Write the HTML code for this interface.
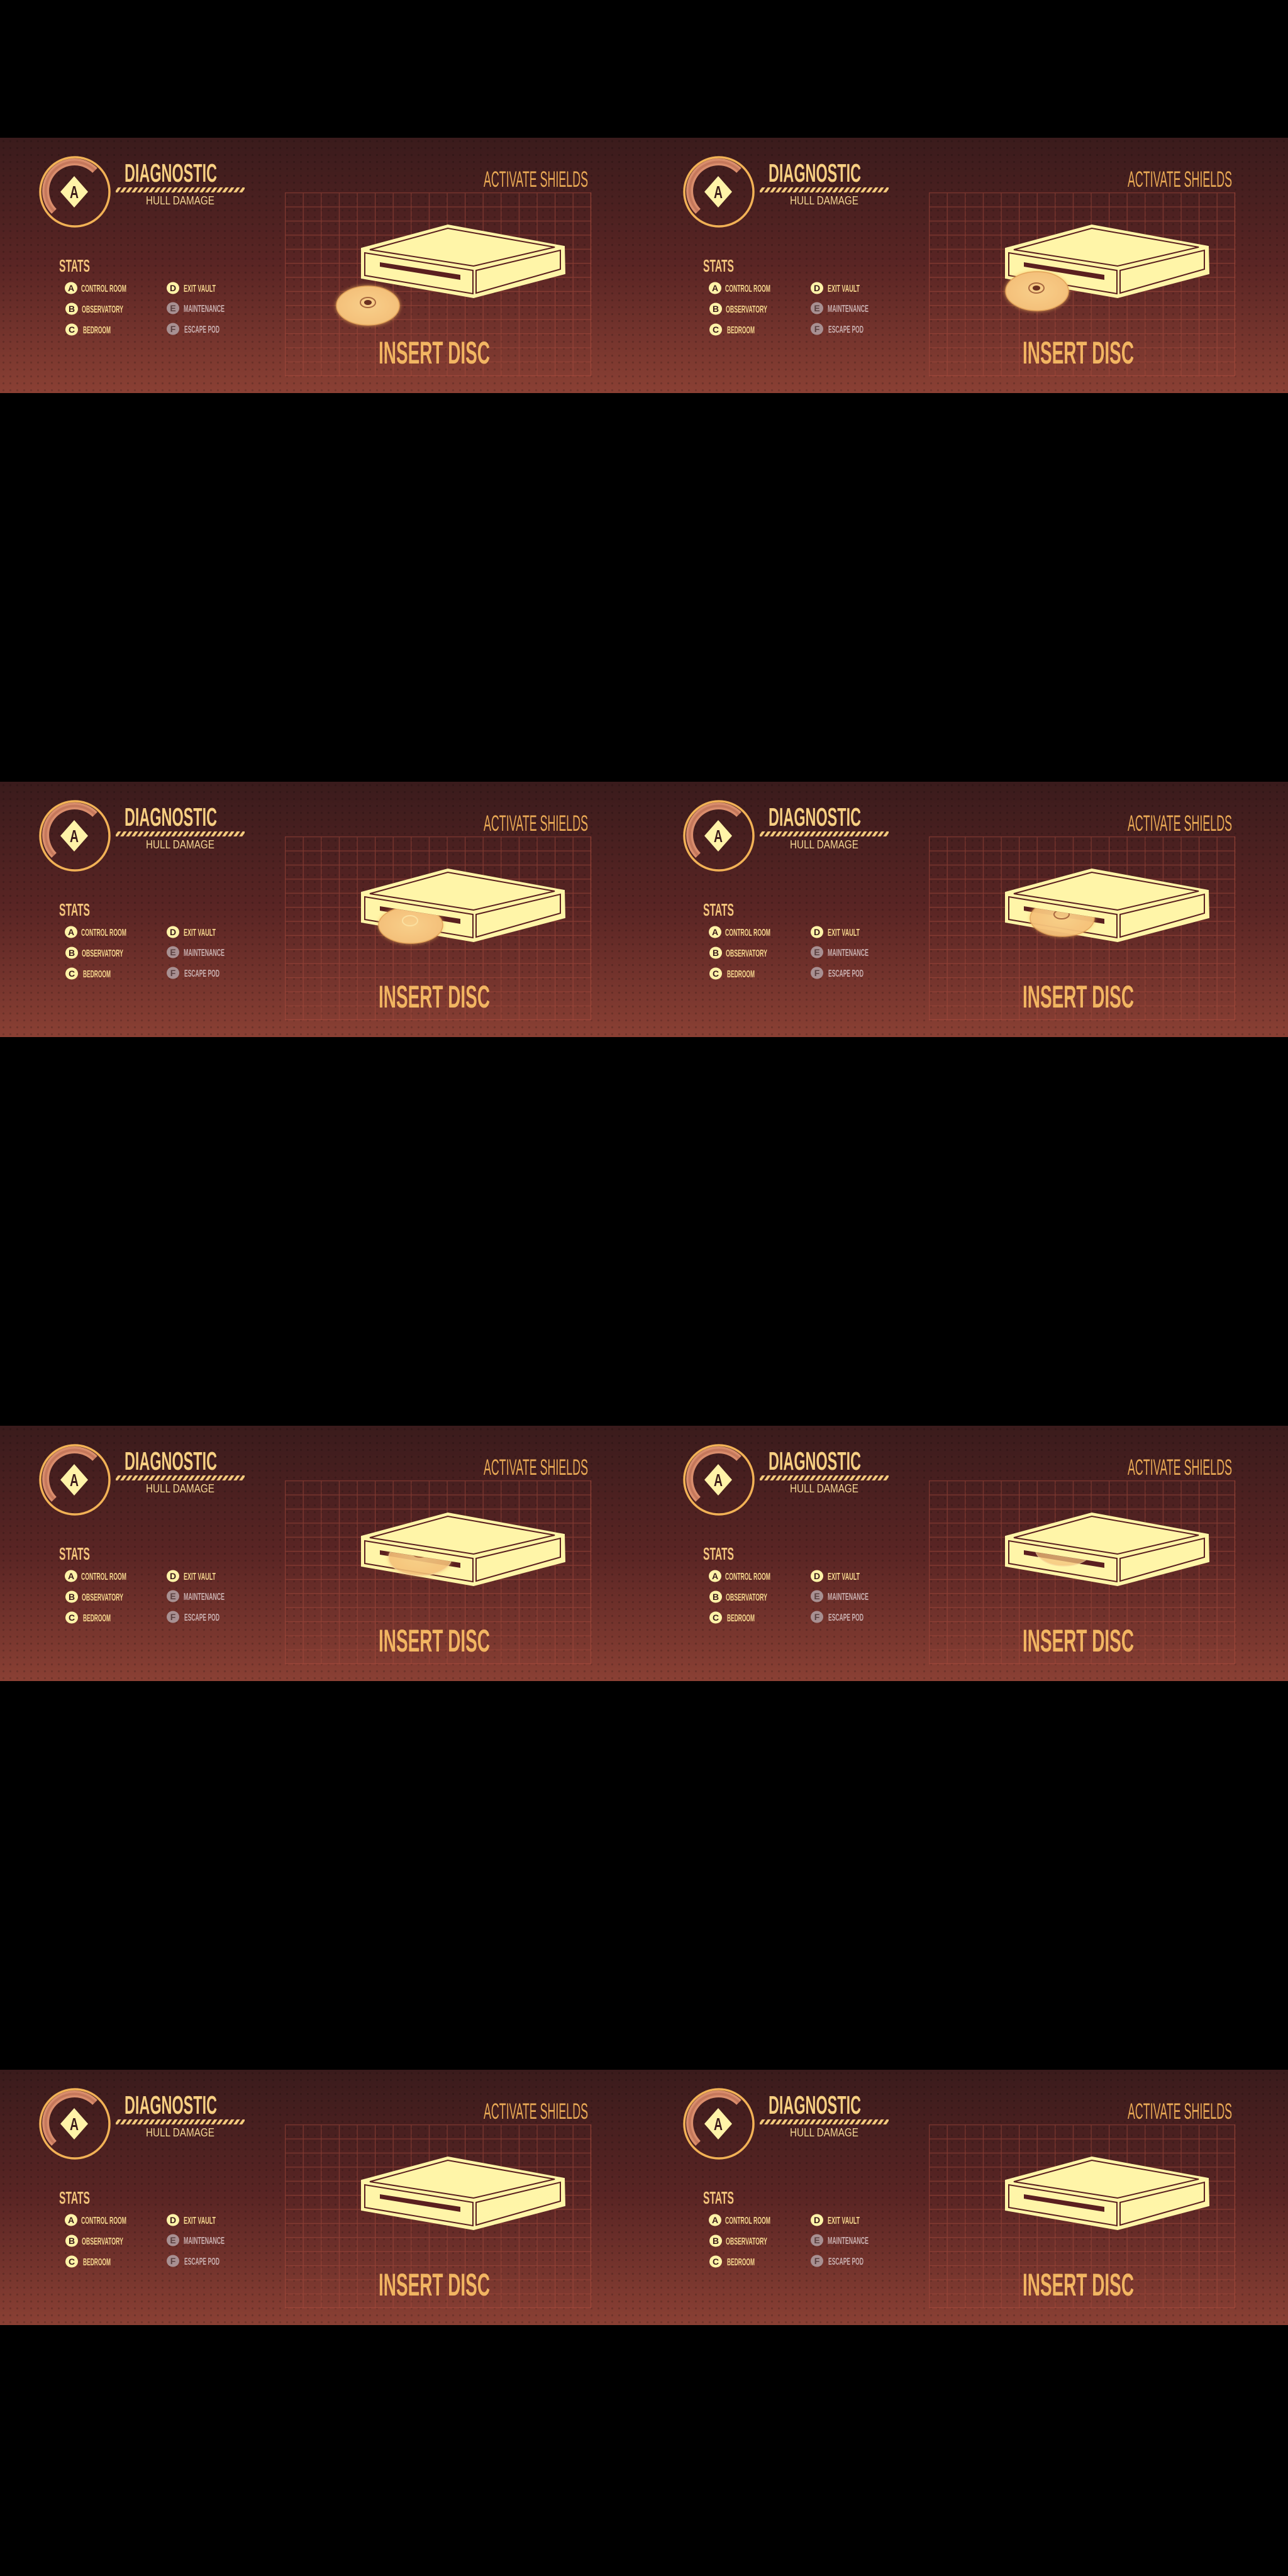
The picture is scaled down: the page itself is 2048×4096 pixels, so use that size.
<!DOCTYPE html>
<html><head><meta charset="utf-8">
<style>
html,body{margin:0;padding:0;background:#000;}
svg{display:block;}
text{font-family:"Liberation Sans",sans-serif;}
</style></head>
<body>
<svg width="2048" height="4096" viewBox="0 0 2048 4096" xmlns="http://www.w3.org/2000/svg">
<defs>
<linearGradient id="bg" x1="0" y1="0" x2="0" y2="1">
<stop offset="0" stop-color="#3a1b1c"/><stop offset="0.5" stop-color="#5a2524"/><stop offset="1" stop-color="#8a4034"/>
</linearGradient>
<pattern id="dots" width="11" height="11" patternUnits="userSpaceOnUse">
<circle cx="5.5" cy="5.5" r="1.6" fill="#000" fill-opacity="0.16"/>
</pattern>
<pattern id="grid" x="453" y="87" width="28.6" height="22.4" patternUnits="userSpaceOnUse">
<path d="M0.5,0 V22.4 M0,0.5 H28.6" stroke="#a54a3c" stroke-opacity="0.55" stroke-width="1.5" fill="none"/>
</pattern>
<pattern id="stripe" width="9" height="9" patternUnits="userSpaceOnUse" patternTransform="skewX(-35)">
<rect x="0" y="0" width="5" height="9" fill="#f3c97c"/>
</pattern>
<radialGradient id="discg" cx="0.5" cy="0.5" r="0.5">
<stop offset="0" stop-color="#f8cf8a"/><stop offset="1" stop-color="#f4c07a"/>
</radialGradient>
<filter id="glow" x="-30%" y="-30%" width="160%" height="160%">
<feGaussianBlur stdDeviation="3"/>
</filter>
<clipPath id="slotclip"><polygon points="500,182 950,252 950,420 500,420"/></clipPath>
<g id="base">
<rect x="0" y="0" width="1024" height="406" fill="url(#bg)"/>
<rect x="0" y="0" width="1024" height="406" fill="url(#dots)"/>
<rect x="453" y="87" width="487" height="292" fill="url(#grid)"/>
<path d="M939.5,87 V379 M453,378.5 H940" stroke="#a54a3c" stroke-opacity="0.55" stroke-width="1.5"/>
<!-- logo -->
<circle cx="119" cy="86" r="55" fill="none" stroke="#f2b256" stroke-width="3.5"/>
<path d="M86,117 A44,44 0 1 1 151,52" fill="none" stroke="#d98d6c" stroke-width="11"/>
<path d="M86,117 A44,44 0 1 1 151,52" fill="none" stroke="#b86a52" stroke-width="4" stroke-opacity="0.6"/>
<polygon points="118,61 140,86 118,111 96,86" fill="#fff3a8"/>
<rect x="184" y="79" width="205" height="8" fill="url(#stripe)"/>
<!-- item circles -->
<ellipse cx="113" cy="239" rx="10" ry="9.5" fill="#fff3a8"/>
<ellipse cx="114" cy="272" rx="10" ry="9.5" fill="#fff3a8"/>
<ellipse cx="114" cy="305" rx="10" ry="9.5" fill="#fff3a8"/>
<ellipse cx="275" cy="239" rx="10" ry="9.5" fill="#fff3a8"/>
<ellipse cx="275" cy="271" rx="10" ry="9.5" fill="#a89092"/>
<ellipse cx="275" cy="304" rx="10" ry="9.5" fill="#a89092"/>
<!-- drive -->
<path d="M575,176 L712,139 L897,173 L898,216 L753,254 L575,223 Z" fill="#fff5a8" stroke="#fff5a8" stroke-width="2"/>
<path d="M588,178 L712,144 L882,174 L753,204 Z" fill="none" stroke="#5a1f1f" stroke-width="2"/>
<path d="M580,183 L752,211 L752,248 L580,219 Z" fill="none" stroke="#5a1f1f" stroke-width="2"/>
<path d="M757,211 L891,179 L891,209 L757,247 Z" fill="none" stroke="#5a1f1f" stroke-width="2"/>
<path d="M604,198 L732,218 L732,226 L604,205 Z" fill="#5a1f1f"/>
</g>
</defs>
<rect x="0" y="0" width="2048" height="4096" fill="#000"/>

<!-- Panel 1 -->
<g transform="translate(0,219)">
<use href="#base"/>
<g>
<ellipse cx="585" cy="267" rx="51" ry="32" fill="#f5b860" filter="url(#glow)" opacity="0.7"/>
<ellipse cx="585" cy="267" rx="50" ry="31" fill="url(#discg)" stroke="#e3a45a" stroke-width="1.5"/>
<ellipse cx="585" cy="262" rx="12" ry="8" fill="none" stroke="#a86840" stroke-width="2"/>
<ellipse cx="585" cy="262" rx="6" ry="4" fill="#6a3020"/>
</g>
<g class="t">
<text x="198" y="70" font-size="41" font-weight="bold" textLength="147" lengthAdjust="spacingAndGlyphs" fill="#f7cf82">DIAGNOSTIC</text>
<text x="232" y="106" font-size="18" textLength="109" lengthAdjust="spacingAndGlyphs" fill="#f3d593">HULL DAMAGE</text>
<text x="769" y="78" font-size="35" textLength="166" lengthAdjust="spacingAndGlyphs" fill="#e9a955">ACTIVATE SHIELDS</text>
<text x="602" y="359" font-size="50" font-weight="bold" textLength="177" lengthAdjust="spacingAndGlyphs" fill="#f2b562">INSERT DISC</text>
<text x="94" y="213" font-size="28" font-weight="bold" textLength="49" lengthAdjust="spacingAndGlyphs" fill="#f3c47c">STATS</text>
<text x="118" y="96" font-size="28" font-weight="bold" text-anchor="middle" textLength="14" lengthAdjust="spacingAndGlyphs" fill="#3a1a1a">A</text>
<g font-size="14" font-weight="bold" text-anchor="middle" fill="#3a1a1a">
<text x="113" y="244">A</text><text x="114" y="277">B</text><text x="114" y="310">C</text><text x="275" y="244">D</text>
<text x="275" y="276" fill="#5a4040">E</text><text x="275" y="309" fill="#5a4040">F</text></g>
<g font-size="16" font-weight="bold" fill="#f5d68e">
<text x="129" y="245" textLength="72" lengthAdjust="spacingAndGlyphs">CONTROL ROOM</text>
<text x="130" y="278" textLength="66" lengthAdjust="spacingAndGlyphs">OBSERVATORY</text>
<text x="132" y="311" textLength="44" lengthAdjust="spacingAndGlyphs">BEDROOM</text>
<text x="292" y="245" textLength="51" lengthAdjust="spacingAndGlyphs">EXIT VAULT</text>
<text x="292" y="277" textLength="65" lengthAdjust="spacingAndGlyphs" fill="#c9b0b0">MAINTENANCE</text>
<text x="293" y="310" textLength="56" lengthAdjust="spacingAndGlyphs" fill="#c9b0b0">ESCAPE POD</text>
</g></g>
</g>

<!-- Panel 2 -->
<g transform="translate(1024,219)">
<use href="#base"/>
<g>
<ellipse cx="625" cy="244" rx="51" ry="32" fill="#f5b860" filter="url(#glow)" opacity="0.7"/>
<ellipse cx="625" cy="244" rx="50" ry="31" fill="url(#discg)" stroke="#e3a45a" stroke-width="1.5"/>
<ellipse cx="624" cy="239" rx="12" ry="8" fill="none" stroke="#a86840" stroke-width="2"/>
<ellipse cx="624" cy="239" rx="6" ry="4" fill="#6a3020"/>
</g>
<g class="t">
<text x="198" y="70" font-size="41" font-weight="bold" textLength="147" lengthAdjust="spacingAndGlyphs" fill="#f7cf82">DIAGNOSTIC</text>
<text x="232" y="106" font-size="18" textLength="109" lengthAdjust="spacingAndGlyphs" fill="#f3d593">HULL DAMAGE</text>
<text x="769" y="78" font-size="35" textLength="166" lengthAdjust="spacingAndGlyphs" fill="#e9a955">ACTIVATE SHIELDS</text>
<text x="602" y="359" font-size="50" font-weight="bold" textLength="177" lengthAdjust="spacingAndGlyphs" fill="#f2b562">INSERT DISC</text>
<text x="94" y="213" font-size="28" font-weight="bold" textLength="49" lengthAdjust="spacingAndGlyphs" fill="#f3c47c">STATS</text>
<text x="118" y="96" font-size="28" font-weight="bold" text-anchor="middle" textLength="14" lengthAdjust="spacingAndGlyphs" fill="#3a1a1a">A</text>
<g font-size="14" font-weight="bold" text-anchor="middle" fill="#3a1a1a">
<text x="113" y="244">A</text><text x="114" y="277">B</text><text x="114" y="310">C</text><text x="275" y="244">D</text>
<text x="275" y="276" fill="#5a4040">E</text><text x="275" y="309" fill="#5a4040">F</text></g>
<g font-size="16" font-weight="bold" fill="#f5d68e">
<text x="129" y="245" textLength="72" lengthAdjust="spacingAndGlyphs">CONTROL ROOM</text>
<text x="130" y="278" textLength="66" lengthAdjust="spacingAndGlyphs">OBSERVATORY</text>
<text x="132" y="311" textLength="44" lengthAdjust="spacingAndGlyphs">BEDROOM</text>
<text x="292" y="245" textLength="51" lengthAdjust="spacingAndGlyphs">EXIT VAULT</text>
<text x="292" y="277" textLength="65" lengthAdjust="spacingAndGlyphs" fill="#c9b0b0">MAINTENANCE</text>
<text x="293" y="310" textLength="56" lengthAdjust="spacingAndGlyphs" fill="#c9b0b0">ESCAPE POD</text>
</g></g>
</g>

<!-- Panel 3 -->
<g transform="translate(0,1243)">
<use href="#base"/>
<g clip-path="url(#slotclip)">
<ellipse cx="653" cy="228" rx="52" ry="30" fill="#f5b860" filter="url(#glow)" opacity="0.6"/>
<ellipse cx="653" cy="228" rx="51" ry="29" fill="url(#discg)" stroke="#e3a45a" stroke-width="1.5"/>
<ellipse cx="652" cy="221" rx="12" ry="8" fill="none" stroke="#fbe0a0" stroke-width="2"/>
</g>
<g class="t">
<text x="198" y="70" font-size="41" font-weight="bold" textLength="147" lengthAdjust="spacingAndGlyphs" fill="#f7cf82">DIAGNOSTIC</text>
<text x="232" y="106" font-size="18" textLength="109" lengthAdjust="spacingAndGlyphs" fill="#f3d593">HULL DAMAGE</text>
<text x="769" y="78" font-size="35" textLength="166" lengthAdjust="spacingAndGlyphs" fill="#e9a955">ACTIVATE SHIELDS</text>
<text x="602" y="359" font-size="50" font-weight="bold" textLength="177" lengthAdjust="spacingAndGlyphs" fill="#f2b562">INSERT DISC</text>
<text x="94" y="213" font-size="28" font-weight="bold" textLength="49" lengthAdjust="spacingAndGlyphs" fill="#f3c47c">STATS</text>
<text x="118" y="96" font-size="28" font-weight="bold" text-anchor="middle" textLength="14" lengthAdjust="spacingAndGlyphs" fill="#3a1a1a">A</text>
<g font-size="14" font-weight="bold" text-anchor="middle" fill="#3a1a1a">
<text x="113" y="244">A</text><text x="114" y="277">B</text><text x="114" y="310">C</text><text x="275" y="244">D</text>
<text x="275" y="276" fill="#5a4040">E</text><text x="275" y="309" fill="#5a4040">F</text></g>
<g font-size="16" font-weight="bold" fill="#f5d68e">
<text x="129" y="245" textLength="72" lengthAdjust="spacingAndGlyphs">CONTROL ROOM</text>
<text x="130" y="278" textLength="66" lengthAdjust="spacingAndGlyphs">OBSERVATORY</text>
<text x="132" y="311" textLength="44" lengthAdjust="spacingAndGlyphs">BEDROOM</text>
<text x="292" y="245" textLength="51" lengthAdjust="spacingAndGlyphs">EXIT VAULT</text>
<text x="292" y="277" textLength="65" lengthAdjust="spacingAndGlyphs" fill="#c9b0b0">MAINTENANCE</text>
<text x="293" y="310" textLength="56" lengthAdjust="spacingAndGlyphs" fill="#c9b0b0">ESCAPE POD</text>
</g></g>
</g>

<!-- Panel 4 -->
<g transform="translate(1024,1243)">
<use href="#base"/>
<g clip-path="url(#slotclip)">
<ellipse cx="665" cy="217" rx="52" ry="30" fill="#f5b860" filter="url(#glow)" opacity="0.6"/>
<ellipse cx="665" cy="217" rx="51" ry="29" fill="url(#discg)" stroke="#e3a45a" stroke-width="1.5" opacity="0.9"/>
<ellipse cx="664" cy="211" rx="12" ry="7" fill="none" stroke="#a86840" stroke-width="2"/>
</g>
<g class="t">
<text x="198" y="70" font-size="41" font-weight="bold" textLength="147" lengthAdjust="spacingAndGlyphs" fill="#f7cf82">DIAGNOSTIC</text>
<text x="232" y="106" font-size="18" textLength="109" lengthAdjust="spacingAndGlyphs" fill="#f3d593">HULL DAMAGE</text>
<text x="769" y="78" font-size="35" textLength="166" lengthAdjust="spacingAndGlyphs" fill="#e9a955">ACTIVATE SHIELDS</text>
<text x="602" y="359" font-size="50" font-weight="bold" textLength="177" lengthAdjust="spacingAndGlyphs" fill="#f2b562">INSERT DISC</text>
<text x="94" y="213" font-size="28" font-weight="bold" textLength="49" lengthAdjust="spacingAndGlyphs" fill="#f3c47c">STATS</text>
<text x="118" y="96" font-size="28" font-weight="bold" text-anchor="middle" textLength="14" lengthAdjust="spacingAndGlyphs" fill="#3a1a1a">A</text>
<g font-size="14" font-weight="bold" text-anchor="middle" fill="#3a1a1a">
<text x="113" y="244">A</text><text x="114" y="277">B</text><text x="114" y="310">C</text><text x="275" y="244">D</text>
<text x="275" y="276" fill="#5a4040">E</text><text x="275" y="309" fill="#5a4040">F</text></g>
<g font-size="16" font-weight="bold" fill="#f5d68e">
<text x="129" y="245" textLength="72" lengthAdjust="spacingAndGlyphs">CONTROL ROOM</text>
<text x="130" y="278" textLength="66" lengthAdjust="spacingAndGlyphs">OBSERVATORY</text>
<text x="132" y="311" textLength="44" lengthAdjust="spacingAndGlyphs">BEDROOM</text>
<text x="292" y="245" textLength="51" lengthAdjust="spacingAndGlyphs">EXIT VAULT</text>
<text x="292" y="277" textLength="65" lengthAdjust="spacingAndGlyphs" fill="#c9b0b0">MAINTENANCE</text>
<text x="293" y="310" textLength="56" lengthAdjust="spacingAndGlyphs" fill="#c9b0b0">ESCAPE POD</text>
</g></g>
</g>

<!-- Panel 5 -->
<g transform="translate(0,2267)">
<use href="#base"/>
<g clip-path="url(#slotclip)">
<ellipse cx="668" cy="210" rx="51" ry="29" fill="#f5b860" filter="url(#glow)" opacity="0.5"/>
<ellipse cx="668" cy="210" rx="50" ry="28" fill="url(#discg)" stroke="#f6d49a" stroke-width="1.5" opacity="0.8"/>
<ellipse cx="668" cy="202" rx="12" ry="7" fill="none" stroke="#a86840" stroke-width="2"/>
</g>
<g class="t">
<text x="198" y="70" font-size="41" font-weight="bold" textLength="147" lengthAdjust="spacingAndGlyphs" fill="#f7cf82">DIAGNOSTIC</text>
<text x="232" y="106" font-size="18" textLength="109" lengthAdjust="spacingAndGlyphs" fill="#f3d593">HULL DAMAGE</text>
<text x="769" y="78" font-size="35" textLength="166" lengthAdjust="spacingAndGlyphs" fill="#e9a955">ACTIVATE SHIELDS</text>
<text x="602" y="359" font-size="50" font-weight="bold" textLength="177" lengthAdjust="spacingAndGlyphs" fill="#f2b562">INSERT DISC</text>
<text x="94" y="213" font-size="28" font-weight="bold" textLength="49" lengthAdjust="spacingAndGlyphs" fill="#f3c47c">STATS</text>
<text x="118" y="96" font-size="28" font-weight="bold" text-anchor="middle" textLength="14" lengthAdjust="spacingAndGlyphs" fill="#3a1a1a">A</text>
<g font-size="14" font-weight="bold" text-anchor="middle" fill="#3a1a1a">
<text x="113" y="244">A</text><text x="114" y="277">B</text><text x="114" y="310">C</text><text x="275" y="244">D</text>
<text x="275" y="276" fill="#5a4040">E</text><text x="275" y="309" fill="#5a4040">F</text></g>
<g font-size="16" font-weight="bold" fill="#f5d68e">
<text x="129" y="245" textLength="72" lengthAdjust="spacingAndGlyphs">CONTROL ROOM</text>
<text x="130" y="278" textLength="66" lengthAdjust="spacingAndGlyphs">OBSERVATORY</text>
<text x="132" y="311" textLength="44" lengthAdjust="spacingAndGlyphs">BEDROOM</text>
<text x="292" y="245" textLength="51" lengthAdjust="spacingAndGlyphs">EXIT VAULT</text>
<text x="292" y="277" textLength="65" lengthAdjust="spacingAndGlyphs" fill="#c9b0b0">MAINTENANCE</text>
<text x="293" y="310" textLength="56" lengthAdjust="spacingAndGlyphs" fill="#c9b0b0">ESCAPE POD</text>
</g></g>
</g>

<!-- Panel 6 -->
<g transform="translate(1024,2267)">
<use href="#base"/>
<g clip-path="url(#slotclip)">
<ellipse cx="668" cy="195" rx="46" ry="28" fill="url(#discg)" stroke="#f6d49a" stroke-width="1.5" opacity="0.75"/>
</g>
<g class="t">
<text x="198" y="70" font-size="41" font-weight="bold" textLength="147" lengthAdjust="spacingAndGlyphs" fill="#f7cf82">DIAGNOSTIC</text>
<text x="232" y="106" font-size="18" textLength="109" lengthAdjust="spacingAndGlyphs" fill="#f3d593">HULL DAMAGE</text>
<text x="769" y="78" font-size="35" textLength="166" lengthAdjust="spacingAndGlyphs" fill="#e9a955">ACTIVATE SHIELDS</text>
<text x="602" y="359" font-size="50" font-weight="bold" textLength="177" lengthAdjust="spacingAndGlyphs" fill="#f2b562">INSERT DISC</text>
<text x="94" y="213" font-size="28" font-weight="bold" textLength="49" lengthAdjust="spacingAndGlyphs" fill="#f3c47c">STATS</text>
<text x="118" y="96" font-size="28" font-weight="bold" text-anchor="middle" textLength="14" lengthAdjust="spacingAndGlyphs" fill="#3a1a1a">A</text>
<g font-size="14" font-weight="bold" text-anchor="middle" fill="#3a1a1a">
<text x="113" y="244">A</text><text x="114" y="277">B</text><text x="114" y="310">C</text><text x="275" y="244">D</text>
<text x="275" y="276" fill="#5a4040">E</text><text x="275" y="309" fill="#5a4040">F</text></g>
<g font-size="16" font-weight="bold" fill="#f5d68e">
<text x="129" y="245" textLength="72" lengthAdjust="spacingAndGlyphs">CONTROL ROOM</text>
<text x="130" y="278" textLength="66" lengthAdjust="spacingAndGlyphs">OBSERVATORY</text>
<text x="132" y="311" textLength="44" lengthAdjust="spacingAndGlyphs">BEDROOM</text>
<text x="292" y="245" textLength="51" lengthAdjust="spacingAndGlyphs">EXIT VAULT</text>
<text x="292" y="277" textLength="65" lengthAdjust="spacingAndGlyphs" fill="#c9b0b0">MAINTENANCE</text>
<text x="293" y="310" textLength="56" lengthAdjust="spacingAndGlyphs" fill="#c9b0b0">ESCAPE POD</text>
</g></g>
</g>

<!-- Panel 7 -->
<g transform="translate(0,3291)">
<use href="#base"/>
<g class="t">
<text x="198" y="70" font-size="41" font-weight="bold" textLength="147" lengthAdjust="spacingAndGlyphs" fill="#f7cf82">DIAGNOSTIC</text>
<text x="232" y="106" font-size="18" textLength="109" lengthAdjust="spacingAndGlyphs" fill="#f3d593">HULL DAMAGE</text>
<text x="769" y="78" font-size="35" textLength="166" lengthAdjust="spacingAndGlyphs" fill="#e9a955">ACTIVATE SHIELDS</text>
<text x="602" y="359" font-size="50" font-weight="bold" textLength="177" lengthAdjust="spacingAndGlyphs" fill="#f2b562">INSERT DISC</text>
<text x="94" y="213" font-size="28" font-weight="bold" textLength="49" lengthAdjust="spacingAndGlyphs" fill="#f3c47c">STATS</text>
<text x="118" y="96" font-size="28" font-weight="bold" text-anchor="middle" textLength="14" lengthAdjust="spacingAndGlyphs" fill="#3a1a1a">A</text>
<g font-size="14" font-weight="bold" text-anchor="middle" fill="#3a1a1a">
<text x="113" y="244">A</text><text x="114" y="277">B</text><text x="114" y="310">C</text><text x="275" y="244">D</text>
<text x="275" y="276" fill="#5a4040">E</text><text x="275" y="309" fill="#5a4040">F</text></g>
<g font-size="16" font-weight="bold" fill="#f5d68e">
<text x="129" y="245" textLength="72" lengthAdjust="spacingAndGlyphs">CONTROL ROOM</text>
<text x="130" y="278" textLength="66" lengthAdjust="spacingAndGlyphs">OBSERVATORY</text>
<text x="132" y="311" textLength="44" lengthAdjust="spacingAndGlyphs">BEDROOM</text>
<text x="292" y="245" textLength="51" lengthAdjust="spacingAndGlyphs">EXIT VAULT</text>
<text x="292" y="277" textLength="65" lengthAdjust="spacingAndGlyphs" fill="#c9b0b0">MAINTENANCE</text>
<text x="293" y="310" textLength="56" lengthAdjust="spacingAndGlyphs" fill="#c9b0b0">ESCAPE POD</text>
</g></g>
</g>

<!-- Panel 8 -->
<g transform="translate(1024,3291)">
<use href="#base"/>
<g class="t">
<text x="198" y="70" font-size="41" font-weight="bold" textLength="147" lengthAdjust="spacingAndGlyphs" fill="#f7cf82">DIAGNOSTIC</text>
<text x="232" y="106" font-size="18" textLength="109" lengthAdjust="spacingAndGlyphs" fill="#f3d593">HULL DAMAGE</text>
<text x="769" y="78" font-size="35" textLength="166" lengthAdjust="spacingAndGlyphs" fill="#e9a955">ACTIVATE SHIELDS</text>
<text x="602" y="359" font-size="50" font-weight="bold" textLength="177" lengthAdjust="spacingAndGlyphs" fill="#f2b562">INSERT DISC</text>
<text x="94" y="213" font-size="28" font-weight="bold" textLength="49" lengthAdjust="spacingAndGlyphs" fill="#f3c47c">STATS</text>
<text x="118" y="96" font-size="28" font-weight="bold" text-anchor="middle" textLength="14" lengthAdjust="spacingAndGlyphs" fill="#3a1a1a">A</text>
<g font-size="14" font-weight="bold" text-anchor="middle" fill="#3a1a1a">
<text x="113" y="244">A</text><text x="114" y="277">B</text><text x="114" y="310">C</text><text x="275" y="244">D</text>
<text x="275" y="276" fill="#5a4040">E</text><text x="275" y="309" fill="#5a4040">F</text></g>
<g font-size="16" font-weight="bold" fill="#f5d68e">
<text x="129" y="245" textLength="72" lengthAdjust="spacingAndGlyphs">CONTROL ROOM</text>
<text x="130" y="278" textLength="66" lengthAdjust="spacingAndGlyphs">OBSERVATORY</text>
<text x="132" y="311" textLength="44" lengthAdjust="spacingAndGlyphs">BEDROOM</text>
<text x="292" y="245" textLength="51" lengthAdjust="spacingAndGlyphs">EXIT VAULT</text>
<text x="292" y="277" textLength="65" lengthAdjust="spacingAndGlyphs" fill="#c9b0b0">MAINTENANCE</text>
<text x="293" y="310" textLength="56" lengthAdjust="spacingAndGlyphs" fill="#c9b0b0">ESCAPE POD</text>
</g></g>
</g>
</svg>
</body></html>
